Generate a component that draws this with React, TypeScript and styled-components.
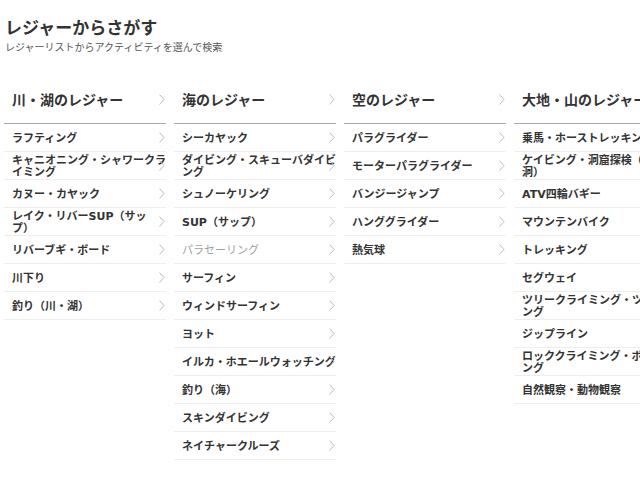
import styled, { createGlobalStyle } from "styled-components";

interface Item {
  label: string;
  disabled?: boolean;
}

interface Category {
  title: string;
  items: Item[];
}

const categories: Category[] = [
  {
    title: "川・湖のレジャー",
    items: [
      { label: "ラフティング" },
      { label: "キャニオニング・シャワークライミング" },
      { label: "カヌー・カヤック" },
      { label: "レイク・リバーSUP（サップ）" },
      { label: "リバーブギ・ボード" },
      { label: "川下り" },
      { label: "釣り（川・湖）" },
    ],
  },
  {
    title: "海のレジャー",
    items: [
      { label: "シーカヤック" },
      { label: "ダイビング・スキューバダイビング" },
      { label: "シュノーケリング" },
      { label: "SUP（サップ）" },
      { label: "パラセーリング", disabled: true },
      { label: "サーフィン" },
      { label: "ウィンドサーフィン" },
      { label: "ヨット" },
      { label: "イルカ・ホエールウォッチング" },
      { label: "釣り（海）" },
      { label: "スキンダイビング" },
      { label: "ネイチャークルーズ" },
    ],
  },
  {
    title: "空のレジャー",
    items: [
      { label: "パラグライダー" },
      { label: "モーターパラグライダー" },
      { label: "バンジージャンプ" },
      { label: "ハンググライダー" },
      { label: "熱気球" },
    ],
  },
  {
    title: "大地・山のレジャー",
    items: [
      { label: "乗馬・ホーストレッキング" },
      { label: "ケイビング・洞窟探検（鍾乳洞）" },
      { label: "ATV四輪バギー" },
      { label: "マウンテンバイク" },
      { label: "トレッキング" },
      { label: "セグウェイ" },
      { label: "ツリークライミング・ツリーイング" },
      { label: "ジップライン" },
      { label: "ロッククライミング・ボルダリング" },
      { label: "自然観察・動物観察" },
    ],
  },
];

const GlobalStyle = createGlobalStyle`
  html, body {
    margin: 0;
    padding: 0;
    background: #fff;
    overflow: hidden;
  }
  body {
    font-family: "Noto Sans CJK JP", "Noto Sans", sans-serif;
    color: #333;
  }
`;

function Chevron() {
  return (
    <ChevronIcon width="6" height="11" viewBox="0 0 6 11">
      <polyline points="0.5,0.5 5,5.5 0.5,10.5" fill="none" stroke="#bbb" strokeWidth="1" />
    </ChevronIcon>
  );
}

function CategoryColumn({ category }: { category: Category }) {
  return (
    <Column>
      <ColumnHeader>
        <HeaderTitle>{category.title}</HeaderTitle>
        <Chevron />
      </ColumnHeader>
      <ItemList>
        {category.items.map((item) => (
          <ItemRow key={item.label} $disabled={item.disabled}>
            <ItemLabel>{item.label}</ItemLabel>
            <Chevron />
          </ItemRow>
        ))}
      </ItemList>
    </Column>
  );
}

export default function App() {
  return (
    <>
      <GlobalStyle />
      <Page>
        <Heading>
          <Title>レジャーからさがす</Title>
          <Subtitle>レジャーリストからアクティビティを選んで検索</Subtitle>
        </Heading>
        <Columns>
          {categories.map((c) => (
            <CategoryColumn key={c.title} category={c} />
          ))}
        </Columns>
      </Page>
    </>
  );
}

const Page = styled.div`
  width: 640px;
  height: 480px;
  overflow: hidden;
  padding: 14px 0 0 4px;
  box-sizing: border-box;
`;

const Heading = styled.div`
  display: flex;
  flex-direction: column;
  padding-left: 1px;
`;

const Title = styled.h1`
  margin: 0;
  font-size: 17px;
  line-height: 26px;
  font-weight: 700;
  color: #333;
`;

const Subtitle = styled.p`
  margin: 0;
  font-size: 10px;
  line-height: 14px;
  color: #555;
`;

const Columns = styled.div`
  display: flex;
  gap: 8px;
  margin-top: 26px;
`;

const Column = styled.section`
  flex: 0 0 162px;
  width: 162px;
`;

const ColumnHeader = styled.div`
  position: relative;
  height: 44px;
  display: flex;
  align-items: center;
  padding: 0 0 5px 8px;
  box-sizing: border-box;
  border-bottom: 1px solid #a8a8a8;

  svg {
    margin-top: -8px;
  }
`;

const HeaderTitle = styled.h2`
  margin: 0;
  font-size: 14px;
  font-weight: 700;
  white-space: nowrap;
  color: #333;
`;

const ItemList = styled.ul`
  list-style: none;
  margin: 0;
  padding: 0;
`;

const ItemRow = styled.li<{ $disabled?: boolean }>`
  position: relative;
  min-height: 28px;
  display: flex;
  align-items: center;
  padding: 3px 0 0 8px;
  box-sizing: border-box;
  border-bottom: 1px solid #eee;
  font-family: "DejaVu Sans", "Noto Sans CJK JP", sans-serif;
  font-size: 11px;
  line-height: 12px;
  font-weight: ${(p) => (p.$disabled ? 400 : 700)};
  color: ${(p) => (p.$disabled ? "#a0a0a0" : "#333")};

  svg {
    margin-top: -6px;
  }
`;

const ItemLabel = styled.span`
  width: 154px;
  line-break: strict;
  text-spacing-trim: space-all;
`;

const ChevronIcon = styled.svg`
  position: absolute;
  right: 1px;
  top: 50%;
  margin-top: -5px;
`;
